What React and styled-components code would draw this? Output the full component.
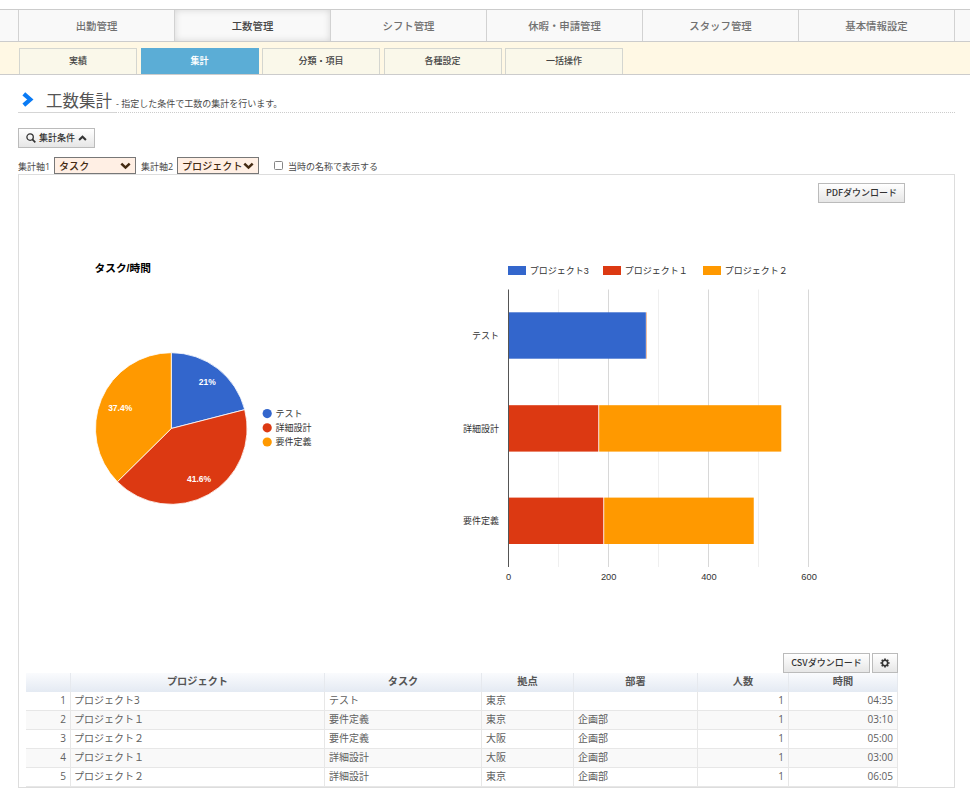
import React from 'react'
import styled, { createGlobalStyle, css } from 'styled-components'

const GlobalStyle = createGlobalStyle`
  *, *::before, *::after {
    box-sizing: border-box;
  }
  body {
    margin: 0;
    background: #fff;
    color: #4a4a4a;
    font-family: "Open Sans", "Noto Sans CJK JP", sans-serif;
    font-size: 9px;
    overflow: hidden;
  }
`

const Page = styled.div`
  width: 970px;
  height: 795px;
  padding-top: 9px;
  overflow: hidden;
`

/* navigation */
const MainNav = styled.nav`
  display: flex;
  height: 33px;
  padding-left: 18px;
  background: #f9f9f9;
  border-top: 1px solid #ccc;
  border-bottom: 1px solid #ccc;
`

const MainTab = styled.a`
  flex: none;
  width: 156px;
  padding-top: 1px;
  border-left: 1px solid #d2d2d2;
  color: #707070;
  font-size: 10.4px;
  font-weight: 500;
  line-height: 31px;
  text-align: center;
  ${({ $active }) => $active && css`
    color: #444;
    box-shadow: inset 0 0 7px rgba(0, 0, 0, 0.14);
  `}
`

const NavEnd = styled.span`
  width: 1px;
  background: #d2d2d2;
`

const SubNav = styled.nav`
  display: flex;
  gap: 3.5px;
  height: 33px;
  padding: 6px 0 0 19px;
  background: #fff8e4;
  border-bottom: 1px solid #ccc;
`

const SubTab = styled.a`
  width: 118px;
  border: 1px solid ${({ $active }) => ($active ? '#5badd6' : '#d4d6d0')};
  border-bottom: 0;
  background: ${({ $active }) => ($active ? '#5badd6' : '#faf8ea')};
  color: ${({ $active }) => ($active ? '#fff' : '#444')};
  font-size: 9px;
  font-weight: ${({ $active }) => ($active ? 700 : 500)};
  line-height: 24px;
  text-align: center;
`

const Main = styled.main`
  width: 937px;
  margin-left: 18px;
`

const TitleBar = styled.header`
  display: flex;
  height: 38px;
  border-bottom: 1px dotted #ccc;
`

const Title = styled.h1`
  display: flex;
  height: 38px;
  width: 98px;
  margin: 0;
  padding: 0 0 0 4px;
  border-bottom: 1px solid #d5d5d5;
  color: #555;
  font-size: 16.5px;
  font-weight: 400;
  line-height: 51px;
  white-space: nowrap;

  svg {
    flex: none;
    margin: 17px 12px 0 0;
  }
`

const Lead = styled.p`
  margin: 0;
  padding-top: 1px;
  line-height: 56px;
  white-space: pre;
`

const Button = styled.button`
  display: inline-flex;
  align-items: center;
  justify-content: center;
  gap: 3px;
  width: ${({ $width }) => $width}px;
  height: 20px;
  padding: 0;
  border: 1px solid #bbb;
  background: linear-gradient(#fff, #e6e6e6);
  color: #333;
  font-family: "Noto Sans CJK JP", sans-serif;
  font-size: 9px;
  font-weight: 500;
  line-height: 18px;
  white-space: nowrap;
`

const Toolbar = styled.div`
  padding-top: 15px;
  height: 44px;
`

const Filters = styled.div`
  display: flex;
  align-items: center;
  height: 17px;
  white-space: nowrap;
`

const FilterLabel = styled.label`
  width: ${({ $width }) => $width}px;
  padding-top: 2px;
  line-height: 16px;
`

const SelectBox = styled.div`
  display: flex;
  align-items: center;
  justify-content: space-between;
  width: 82px;
  height: 17px;
  margin-right: 5px;
  padding: 1px 4px 0;
  border: 1px solid #777;
  background: #ffefe4;
  color: #442a12;
  font-size: 10.1px;
  font-weight: 500;
  line-height: 14px;

  svg {
    flex: none;
    margin-left: -1px;
  }
`

const Check = styled.span`
  width: 9px;
  height: 9px;
  margin: 0 5px 0 10px;
  border: 1px solid #858585;
  border-radius: 1.5px;
  background: #fff;
`

const Panel = styled.section`
  height: 614px;
  border: 1px solid #ddd;
`

const PanelTop = styled.div`
  display: flex;
  justify-content: flex-end;
  height: 28px;
  padding: 8px 49px 0 0;
`

const Charts = styled.div`
  display: flex;
  height: 450px;

  svg {
    flex: none;
    display: block;
  }
  text {
    font-family: "Liberation Sans", "Noto Sans CJK JP", sans-serif;
    font-size: 9px;
    fill: #333;
  }
`

const Report = styled.div`
  width: 872px;
  margin-left: 7px;
`

const ReportTools = styled.div`
  display: flex;
  justify-content: flex-end;
  gap: 2px;
  height: 20px;
`

const Table = styled.div`
  display: grid;
  grid-template-columns: 45px 254px 157px 92px 124px 91px 109px;
`

const HeadCell = styled.div`
  height: 19px;
  border-right: 1px solid #e6e9ee;
  background: linear-gradient(#fafbfd, #e4eaf3);
  color: #555;
  font-size: 10.2px;
  font-weight: 700;
  line-height: 17px;
  text-align: center;
`

const Cell = styled.div`
  height: 19px;
  padding: 0 4px 0 ${({ $left }) => $left}px;
  border-right: 1px solid #e7e7e7;
  border-bottom: 1px solid #e7e7e7;
  background: ${({ $even }) => ($even ? '#f9f9f9' : '#fff')};
  color: #606060;
  font-size: 10px;
  line-height: 16px;
  text-align: ${({ $right }) => ($right ? 'right' : 'left')};
  white-space: nowrap;
`

const mainTabs = ['出勤管理', '工数管理', 'シフト管理', '休暇・申請管理', 'スタッフ管理', '基本情報設定']
const subTabs = ['実績', '集計', '分類・項目', '各種設定', '一括操作']

const BLUE = '#3366cc'
const RED = '#dc3912'
const ORANGE = '#ff9900'

const slices = [
  { name: 'テスト', value: 21, color: BLUE, x: 207.2, y: 385 },
  { name: '詳細設計', value: 41.6, color: RED, x: 199, y: 482 },
  { name: '要件定義', value: 37.4, color: ORANGE, x: 120.2, y: 411 }
]

const series = [
  { name: 'プロジェクト3', color: BLUE, x: 508 },
  { name: 'プロジェクト１', color: RED, x: 603 },
  { name: 'プロジェクト２', color: ORANGE, x: 703 }
]

const bars = [
  { name: 'テスト', y: 312.3, parts: [[275, BLUE]] },
  { name: '詳細設計', y: 405.2, parts: [[180, RED], [365, ORANGE]] },
  { name: '要件定義', y: 497.6, parts: [[190, RED], [300, ORANGE]] }
]

const heads = ['', 'プロジェクト', 'タスク', '拠点', '部署', '人数', '時間']
const rows = [
  ['1', 'プロジェクト3', 'テスト', '東京', '', '1', '04:35'],
  ['2', 'プロジェクト１', '要件定義', '東京', '企画部', '1', '03:10'],
  ['3', 'プロジェクト２', '要件定義', '大阪', '企画部', '1', '05:00'],
  ['4', 'プロジェクト１', '詳細設計', '大阪', '企画部', '1', '03:00'],
  ['5', 'プロジェクト２', '詳細設計', '東京', '企画部', '1', '06:05']
]

const Chevron = ({ up, size = 11 }) => (
  <svg width={size} height={size * 0.7} viewBox="0 0 10 7">
    <path
      d={up ? 'M1.2 5.6 5 1.9 8.8 5.6' : 'M1.2 1.4 5 5.1 8.8 1.4'}
      fill="none" stroke="currentColor" strokeWidth="2.3"
    />
  </svg>
)

const SearchIcon = () => (
  <svg width="10" height="10" viewBox="0 0 10 10" fill="none" stroke="currentColor">
    <circle cx="4.1" cy="4.1" r="3.2" strokeWidth="1.3"/>
    <path d="M6.4 6.4 9.3 9.3" strokeWidth="1.7"/>
  </svg>
)

const GearIcon = () => (
  <svg width="10" height="10" viewBox="-5 -5 10 10" fill="none" stroke="currentColor">
    <circle r="2.7" strokeWidth="1.6"/>
    {
      [0, 45, 90, 135, 180, 225, 270, 315].map((a) => (
        <path key={a} d="M0-3V-4.6" strokeWidth="1.7" transform={`rotate(${a})`}/>
      ))
    }
  </svg>
)

const PieChart = () => {
  const cx = 171.3
  const cy = 428.5
  const r = 75.8
  const point = (pct) => {
    const a = (pct / 100) * Math.PI * 2
    return `${cx + r * Math.sin(a)} ${cy - r * Math.cos(a)}`
  }
  let total = 0
  return (
    <svg width="420" height="450" viewBox="19 203 420 450">
      <text x="94.5" y="271.5" fontWeight="700" style={{ fontSize: 10.7, fill: '#000' }}>タスク/時間</text>
      {
        slices.map((s) => {
          const from = total
          total += s.value
          return <path
            key={s.name}
            d={`M${cx} ${cy}L${point(from)}A${r} ${r} 0 0 1 ${point(total)}Z`}
            fill={s.color} stroke="#fff" strokeWidth="0.8"
          />
        })
      }
      {
        slices.map((s, i) => (
          <g key={s.name}>
            <text x={s.x} y={s.y} textAnchor="middle" fontWeight="700" style={{ fontSize: 8.5, fill: '#fff' }}>{`${s.value}%`}</text>
            <circle cx="267.2" cy={413.6 + i * 14.2} r="4.6" fill={s.color}/>
            <text x="275.5" y={417 + i * 14.2}>{s.name}</text>
          </g>
        ))
      }
    </svg>
  )
}

const BarChart = () => (
  <svg width="400" height="450" viewBox="439 203 400 450">
    {
      series.map((s) => (
        <g key={s.name}>
          <rect x={s.x} y="266" width="18" height="9" fill={s.color}/>
          <text x={s.x + 21.7} y="274">{s.name}</text>
        </g>
      ))
    }
    {
      [1, 2, 3, 4, 5, 6].map((n) => (
        <rect key={n} x={Math.floor(508.2 + n * 50.1)} y="289.5" width="1" height="277.5" fill={n % 2 ? '#efefef' : '#d8d8d8'}/>
      ))
    }
    {
      bars.map((b) => {
        let x = 508.5
        return (
          <g key={b.name}>
            <text x="499" y={b.y + 26.6} textAnchor="end">{b.name}</text>
            {
              b.parts.map(([hours, color], i) => {
                const left = x
                x += hours * 0.5005
                return <rect key={color} x={left + (i ? 0.6 : 0)} y={b.y} width={x - left - (i ? 0.6 : 0.3)} height="46.4" fill={color}/>
              })
            }
          </g>
        )
      })
    }
    <rect x="646" y="312.3" width="0.7" height="46.4" fill="#e9a57c"/>
    <rect x="508" y="289.5" width="1" height="277.5" fill="#555"/>
    {
      [0, 200, 400, 600].map((n) => (
        <text key={n} x={508.5 + n * 0.501} y="579.7" textAnchor="middle" style={{ fontSize: 9.3 }}>{n}</text>
      ))
    }
  </svg>
)

const App = () => (
  <>
    <GlobalStyle/>
    <Page>
      <MainNav>
        {mainTabs.map((t, i) => <MainTab key={t} $active={i === 1}>{t}</MainTab>)}
        <NavEnd/>
      </MainNav>
      <SubNav>
        {subTabs.map((t, i) => <SubTab key={t} $active={i === 1}>{t}</SubTab>)}
      </SubNav>
      <Main>
        <TitleBar>
          <Title>
            <svg width="12" height="15" viewBox="0 0 12 15">
              <path d="M1.8 1.8 8.3 7.5 1.8 13.2" fill="none" stroke="#0a7bf5" strokeWidth="4.2"/>
            </svg>
            工数集計
          </Title>
          <Lead>- 指定した条件で工数の集計を行います。</Lead>
        </TitleBar>
        <Toolbar>
          <Button $width={77}>
            <SearchIcon/>
            集計条件
            <Chevron up size={9}/>
          </Button>
        </Toolbar>
        <Filters>
          <FilterLabel $width={36}>集計軸1</FilterLabel>
          <SelectBox>タスク<Chevron/></SelectBox>
          <FilterLabel $width={36}>集計軸2</FilterLabel>
          <SelectBox>プロジェクト<Chevron/></SelectBox>
          <Check/>
          <FilterLabel>当時の名称で表示する</FilterLabel>
        </Filters>
        <Panel>
          <PanelTop>
            <Button $width={87}>PDFダウンロード</Button>
          </PanelTop>
          <Charts>
            <PieChart/>
            <BarChart/>
          </Charts>
          <Report>
            <ReportTools>
              <Button $width={87}>CSVダウンロード</Button>
              <Button $width={26}><GearIcon/></Button>
            </ReportTools>
            <Table>
              {heads.map((h) => <HeadCell key={h}>{h}</HeadCell>)}
              {
                rows.map((row, r) => row.map((value, c) => (
                  <Cell key={`${r}-${c}`} $even={r % 2 === 1} $left={c > 1 ? 4 : 3} $right={c === 0 || c > 4}>{value}</Cell>
                )))
              }
            </Table>
          </Report>
        </Panel>
      </Main>
    </Page>
  </>
)

export default App
